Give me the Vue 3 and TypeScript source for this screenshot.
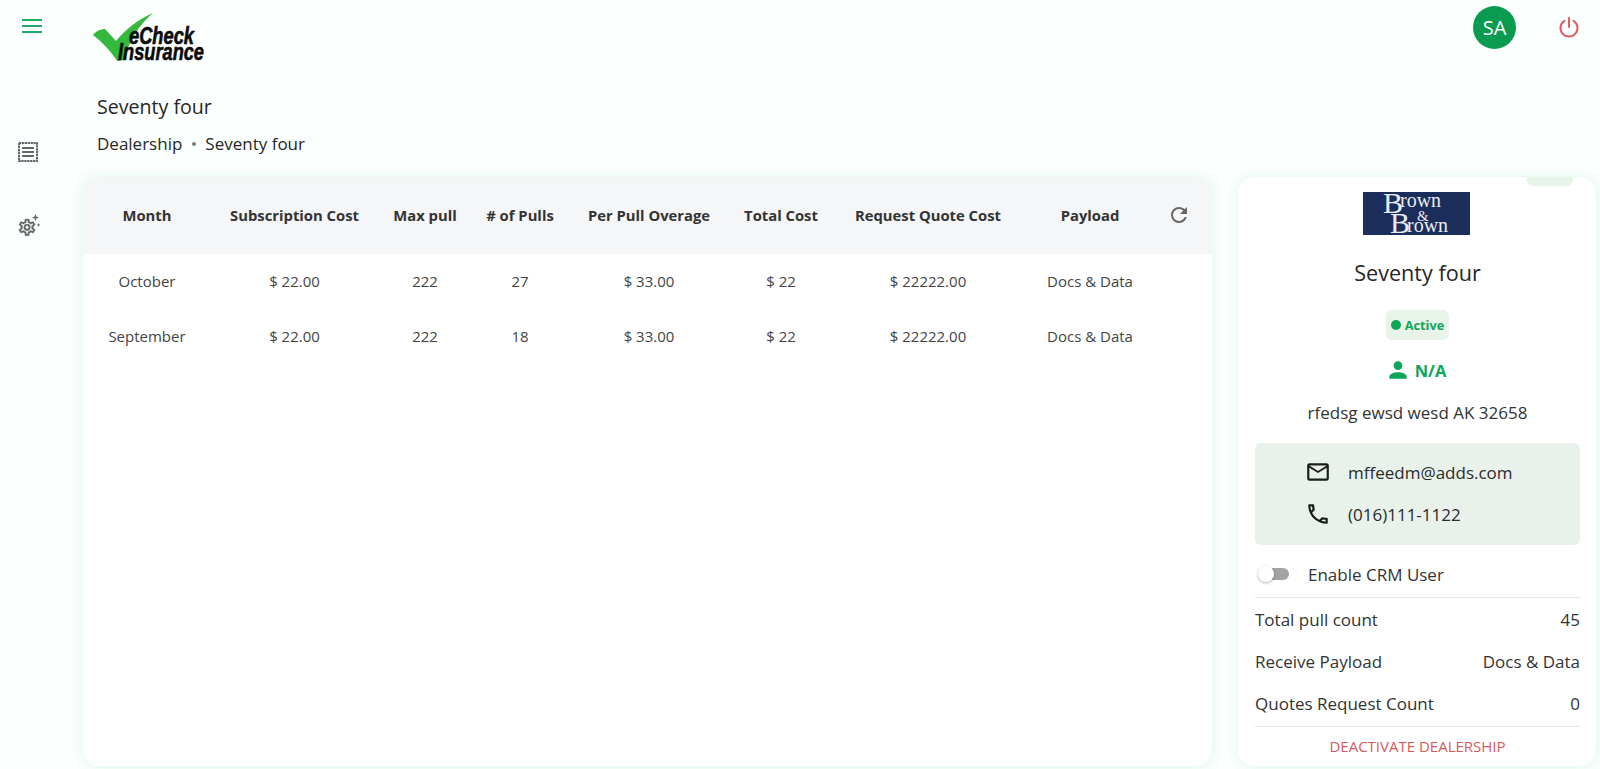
<script setup lang="ts">
interface Row { month: string; sub: string; max: string; pulls: string; over: string; total: string; quote: string; payload: string }
const heads: string[] = ['Month', 'Subscription Cost', 'Max pull', '# of Pulls', 'Per Pull Overage', 'Total Cost', 'Request Quote Cost', 'Payload']
const rows: Row[] = [
  { month: 'October', sub: '$ 22.00', max: '222', pulls: '27', over: '$ 33.00', total: '$ 22', quote: '$ 22222.00', payload: 'Docs & Data' },
  { month: 'September', sub: '$ 22.00', max: '222', pulls: '18', over: '$ 33.00', total: '$ 22', quote: '$ 22222.00', payload: 'Docs & Data' },
]
const stats = [
  { label: 'Total pull count', value: '45' },
  { label: 'Receive Payload', value: 'Docs & Data' },
  { label: 'Quotes Request Count', value: '0' },
]
</script>

<template>
  <div class="app">
    <aside class="rail">
      <button class="rail-btn menu" aria-label="Menu">
        <svg width="20" height="14" viewBox="0 0 20 14"><path d="M0 1h20M0 7h20M0 13h20" stroke="#1fae6a" stroke-width="2" fill="none" /></svg>
      </button>
      <button class="rail-btn receipt" aria-label="Reports">
        <svg width="22" height="22" viewBox="0 0 22 22" fill="none" stroke="#666" stroke-width="2">
          <path d="M2 2h18v18H2z" stroke-dasharray="2.300 0.600" />
          <path d="M5 7h12M5 11h12M5 15h12" stroke-width="2" />
        </svg>
      </button>
      <button class="rail-btn gear" aria-label="Settings">
        <svg width="24" height="24" viewBox="0 0 24 24">
          <g transform="translate(0 3.200) scale(0.84)">
            <path fill="#666" stroke="#666" stroke-width="0.3" d="M12,8A4,4 0 0,1 16,12A4,4 0 0,1 12,16A4,4 0 0,1 8,12A4,4 0 0,1 12,8M12,10A2,2 0 0,0 10,12A2,2 0 0,0 12,14A2,2 0 0,0 14,12A2,2 0 0,0 12,10M10,22C9.75,22 9.54,21.82 9.5,21.58L9.13,18.93C8.5,18.68 7.96,18.34 7.44,17.94L4.95,18.95C4.73,19.03 4.46,18.95 4.34,18.73L2.34,15.27C2.21,15.05 2.27,14.78 2.46,14.63L4.57,12.97L4.5,12L4.57,11L2.46,9.37C2.27,9.22 2.21,8.95 2.34,8.73L4.34,5.27C4.46,5.05 4.73,4.96 4.95,5.05L7.44,6.05C7.96,5.66 8.5,5.32 9.13,5.07L9.5,2.42C9.54,2.18 9.75,2 10,2H14C14.25,2 14.46,2.18 14.5,2.42L14.87,5.07C15.5,5.32 16.04,5.66 16.56,6.05L19.05,5.05C19.27,4.96 19.54,5.05 19.66,5.27L21.66,8.73C21.79,8.95 21.73,9.22 21.54,9.37L19.43,11L19.5,12L19.43,13L21.54,14.63C21.73,14.78 21.79,15.05 21.66,15.27L19.66,18.73C19.54,18.95 19.27,19.04 19.05,18.95L16.56,17.95C16.04,18.34 15.5,18.68 14.87,18.93L14.5,21.58C14.46,21.82 14.25,22 14,22H10M11.25,4L10.88,6.61C9.68,6.86 8.62,7.5 7.85,8.39L5.44,7.35L4.69,8.65L6.8,10.2C6.4,11.37 6.4,12.64 6.8,13.8L4.68,15.36L5.43,16.66L7.86,15.62C8.63,16.5 9.68,17.14 10.87,17.38L11.24,20H12.76L13.13,17.39C14.32,17.14 15.37,16.5 16.14,15.62L18.57,16.66L19.32,15.36L17.2,13.81C17.6,12.64 17.6,11.37 17.2,10.2L19.31,8.65L18.56,7.35L16.15,8.39C15.38,7.5 14.32,6.86 13.12,6.62L12.75,4H11.25Z" />
          </g>
          <path fill="#666" d="M18.500 0l1 2.500 2.500 1-2.500 1-1 2.500-1-2.500-2.500-1 2.500-1zM21.500 9l.6 1.400 1.400.6-1.400.6-.6 1.400-.6-1.400-1.400-.6 1.400-.6z" />
        </svg>
      </button>
    </aside>

    <div class="main">
      <header class="top">
        <svg class="logo" width="118" height="56" viewBox="0 0 118 56">
          <path d="M0 22 C3 18 8 16 12 16 L23 28 C32 17 44 7 60 0 C47 11 37 25 31 47 L24 48 C18 38 9 29 0 22Z" fill="#35b93c" />
          <text x="36" y="31" textLength="65" lengthAdjust="spacingAndGlyphs" class="logo-text">eCheck</text>
          <text x="25" y="47" textLength="86" lengthAdjust="spacingAndGlyphs" class="logo-text">Insurance</text>
        </svg>
        <div class="avatar">SA</div>
        <button class="power" aria-label="Log out">
          <svg width="24" height="24" viewBox="0 0 24 24" fill="none" stroke="#de5f63" stroke-width="2" stroke-linecap="round">
            <path d="M12 3v9" />
            <path d="M7.500 5.800a8.500 8.500 0 1 0 9 0" />
          </svg>
        </button>
      </header>

      <h1 class="title">Seventy four</h1>
      <nav class="crumbs"><span>Dealership</span><i class="dot"></i><span>Seventy four</span></nav>

      <div class="content">
        <section class="table-card">
          <table>
            <colgroup>
              <col style="width:128px" /><col style="width:167px" /><col style="width:94px" /><col style="width:96px" />
              <col style="width:162px" /><col style="width:102px" /><col style="width:192px" /><col style="width:132px" /><col />
            </colgroup>
            <thead>
              <tr>
                <th v-for="h in heads" :key="h">{{ h }}</th>
                <th class="refresh">
                  <svg width="24" height="24" viewBox="0 0 24 24"><path fill="#666" d="M17.65,6.35C16.2,4.9 14.21,4 12,4A8,8 0 0,0 4,12A8,8 0 0,0 12,20C15.73,20 18.84,17.45 19.73,14H17.65C16.83,16.33 14.61,18 12,18A6,6 0 0,1 6,12A6,6 0 0,1 12,6C13.66,6 15.14,6.69 16.22,7.78L13,11H20V4L17.65,6.35Z" /></svg>
                </th>
              </tr>
            </thead>
            <tbody>
              <tr v-for="r in rows" :key="r.month">
                <td>{{ r.month }}</td><td>{{ r.sub }}</td><td>{{ r.max }}</td><td>{{ r.pulls }}</td>
                <td>{{ r.over }}</td><td>{{ r.total }}</td><td>{{ r.quote }}</td><td>{{ r.payload }}</td><td></td>
              </tr>
            </tbody>
          </table>
        </section>

        <aside class="side-card">
          <span class="tab"></span>
          <svg class="bb" width="107" height="43" viewBox="0 0 107 43">
            <rect width="107" height="43" fill="#1b2d5b" />
            <text x="20" y="21" class="bb-big">B</text>
            <text x="27" y="41" class="bb-big">B</text>
            <text x="37" y="15" class="bb-small">rown</text>
            <text x="54" y="29" class="bb-amp">&amp;</text>
            <text x="44" y="40" class="bb-small">rown</text>
          </svg>
          <h2 class="name">Seventy four</h2>
          <div class="badge"><i class="badge-dot"></i>Active</div>
          <div class="person">
            <svg width="26" height="26" viewBox="0 0 24 24"><path fill="#0ea658" d="M12,4A4,4 0 0,1 16,8A4,4 0 0,1 12,12A4,4 0 0,1 8,8A4,4 0 0,1 12,4M12,14C16.420,14 20,15.790 20,18V20H4V18C4,15.790 7.580,14 12,14Z" /></svg>
            <span>N/A</span>
          </div>
          <p class="address">rfedsg ewsd wesd AK 32658</p>
          <div class="contact">
            <div class="contact-row">
              <svg width="26" height="26" viewBox="0 0 24 24"><path fill="#1c1c1c" d="M22 6C22 4.900 21.100 4 20 4H4C2.900 4 2 4.900 2 6V18C2 19.100 2.900 20 4 20H20C21.100 20 22 19.100 22 18V6M20 6L12 11L4 6H20M20 18H4V8L12 13L20 8V18Z" /></svg>
              <span>mffeedm@adds.com</span>
            </div>
            <div class="contact-row">
              <svg width="26" height="26" viewBox="0 0 24 24"><path fill="#1c1c1c" d="M20,15.500C18.800,15.500 17.500,15.300 16.400,14.900C16.300,14.900 16.200,14.900 16.100,14.900C15.800,14.900 15.600,15 15.400,15.200L13.200,17.400C10.400,15.900 8,13.600 6.600,10.800L8.800,8.600C9.100,8.300 9.200,7.900 9,7.600C8.700,6.500 8.500,5.200 8.500,4C8.500,3.500 8,3 7.500,3H4C3.500,3 3,3.500 3,4C3,13.400 10.600,21 20,21C20.500,21 21,20.500 21,20V16.500C21,16 20.500,15.500 20,15.500M5,5H6.500C6.600,5.900 6.800,6.800 7,7.600L5.800,8.800C5.400,7.600 5.100,6.300 5,5M19,19C17.700,18.900 16.400,18.600 15.200,18.200L16.400,17C17.200,17.200 18.100,17.400 19,17.400V19Z" /></svg>
              <span>(016)111-1122</span>
            </div>
          </div>
          <div class="toggle-row">
            <span class="switch"><i class="knob"></i></span>
            <span>Enable CRM User</span>
          </div>
          <div class="stats">
            <div v-for="s in stats" :key="s.label" class="stat"><span>{{ s.label }}</span><span>{{ s.value }}</span></div>
          </div>
          <button class="deactivate">DEACTIVATE DEALERSHIP</button>
        </aside>
      </div>
    </div>
  </div>
</template>

<style>
html, body { margin: 0; overflow: hidden; background: #fbfffd; }
</style>

<style scoped>
* { box-sizing: border-box; }
.app {
  display: flex;
  height: 769px;
  font-family: "Open Sans", "Noto Sans", sans-serif;
  color: #2b2b2b;
  background: #fbfffd;
}
button { border: 0; background: none; padding: 0; font: inherit; display: block; cursor: pointer; }
.rail { width: 83px; flex: none; display: flex; flex-direction: column; align-items: flex-start; }
.rail-btn { line-height: 0; }
.menu { margin: 19px 0 0 22px; }
.receipt { margin: 108px 0 0 17px; }
.gear { margin: 51px 0 0 17px; }
.main { flex: 1; min-width: 0; padding-right: 4px; display: flex; flex-direction: column; }
.top { display: flex; align-items: flex-start; height: 92px; flex: none; padding-left: 10px; }
.logo { margin-top: 13px; }
.logo-text { font: italic 700 23px "Liberation Sans", sans-serif; fill: #0b0b0b; stroke: #0b0b0b; stroke-width: 0.6px; }
.avatar {
  margin: 6px 0 0 auto;
  width: 43px; height: 43px; border-radius: 50%;
  background: #0b9b50; color: #fff;
  display: flex; align-items: center; justify-content: center;
  font-size: 20px;
}
.power { margin: 15px 15px 0 41px; line-height: 0; }
.title { margin: 0 0 0 14px; font-size: 19.600px; font-weight: 500; line-height: 30px; color: #262626; }
.crumbs { margin: 9px 0 0 14px; display: flex; align-items: center; font-size: 17px; color: #262626; height: 25px; }
.dot { width: 4px; height: 4px; border-radius: 50%; background: #7a7a7a; margin: 0 9.500px; }
.content { display: flex; gap: 26px; margin-top: 21px; flex: 1; min-height: 0; padding-bottom: 3px; }
.table-card {
  width: 1129px; flex: none;
  background: #fff; border-radius: 16px; overflow: hidden;
  box-shadow: 0 0 14px rgba(20, 170, 100, 0.12);
}
table { width: 100%; border-collapse: collapse; table-layout: fixed; font-size: 15px; }
th { height: 77px; background: #f4f6f8; font-size: 14.800px; font-weight: 700; color: #333; text-align: center; padding: 0 0 2px; white-space: nowrap; }
td { height: 55px; text-align: center; color: #444; padding: 0 0 2px; white-space: nowrap; }
.refresh svg { display: block; margin: 0 auto; transform: translateX(-5px); }
.side-card {
  position: relative; flex: 1; min-width: 0;
  background: #fff; border-radius: 16px; overflow: hidden;
  box-shadow: 0 0 14px rgba(20, 170, 100, 0.12);
  padding: 15px 16px 0 17px;
  display: flex; flex-direction: column; align-items: center;
}
.tab { position: absolute; top: -6px; right: 23px; width: 46px; height: 15px; border-radius: 6px; background: #e8f3ea; }
.bb { flex: none; margin-right: 2px; }
.bb-big { font: 400 30px "Liberation Serif", serif; fill: #e8ebf2; }
.bb-small { font: 400 20px "Liberation Serif", serif; fill: #e8ebf2; }
.bb-amp { font: 400 15px "Liberation Serif", serif; fill: #e8ebf2; }
.name { margin: 23px 0 0; font-size: 21.600px; font-weight: 500; line-height: 30px; color: #262626; }
.badge {
  margin-top: 22px; height: 30px; width: 63px; border-radius: 6px;
  background: #e8f3ea; color: #0ea658; font-size: 12.700px; font-weight: 700;
  display: flex; align-items: center; justify-content: center; gap: 4px;
}
.badge-dot { width: 10px; height: 10px; border-radius: 50%; background: #0ea658; flex: none; }
.person { margin-top: 17px; height: 26px; display: flex; align-items: center; gap: 4px; color: #0ea658; font-weight: 700; font-size: 16.500px; margin-right: 4px; }
.address { margin: 18px 0 0; font-size: 17px; line-height: 24px; color: #333; }
.contact {
  margin-top: 18px; width: 100%; height: 102px; background: #e8f2ea; border-radius: 6px;
  padding: 8px 0 0 50px;
}
.contact-row { display: flex; align-items: center; gap: 17px; height: 42px; font-size: 17px; color: #2b2b2b; }
.toggle-row { align-self: stretch; display: flex; align-items: center; gap: 18px; height: 28px; margin-top: 15px; font-size: 17px; color: #333; padding-left: 3px; }
.switch { position: relative; width: 32px; height: 12px; flex: none; }
.switch::before { content: ""; position: absolute; left: 6px; right: 1px; top: 0; bottom: 0; border-radius: 6px; background: #a3a3a3; }
.knob { position: absolute; left: 0; top: -2px; width: 16px; height: 16px; border-radius: 50%; background: #fff; box-shadow: 0 1px 3px rgba(0,0,0,.3); }
.stats { align-self: stretch; margin-top: 9px; border-top: 1px solid #e4e6e5; border-bottom: 1px solid #e4e6e5; padding: 0 0 2px; }
.stat { display: flex; justify-content: space-between; align-items: center; height: 42px; font-size: 17px; color: #333; }
.deactivate { margin-top: 7px; font-size: 15px; color: #d65a60; line-height: 24px; }
</style>
